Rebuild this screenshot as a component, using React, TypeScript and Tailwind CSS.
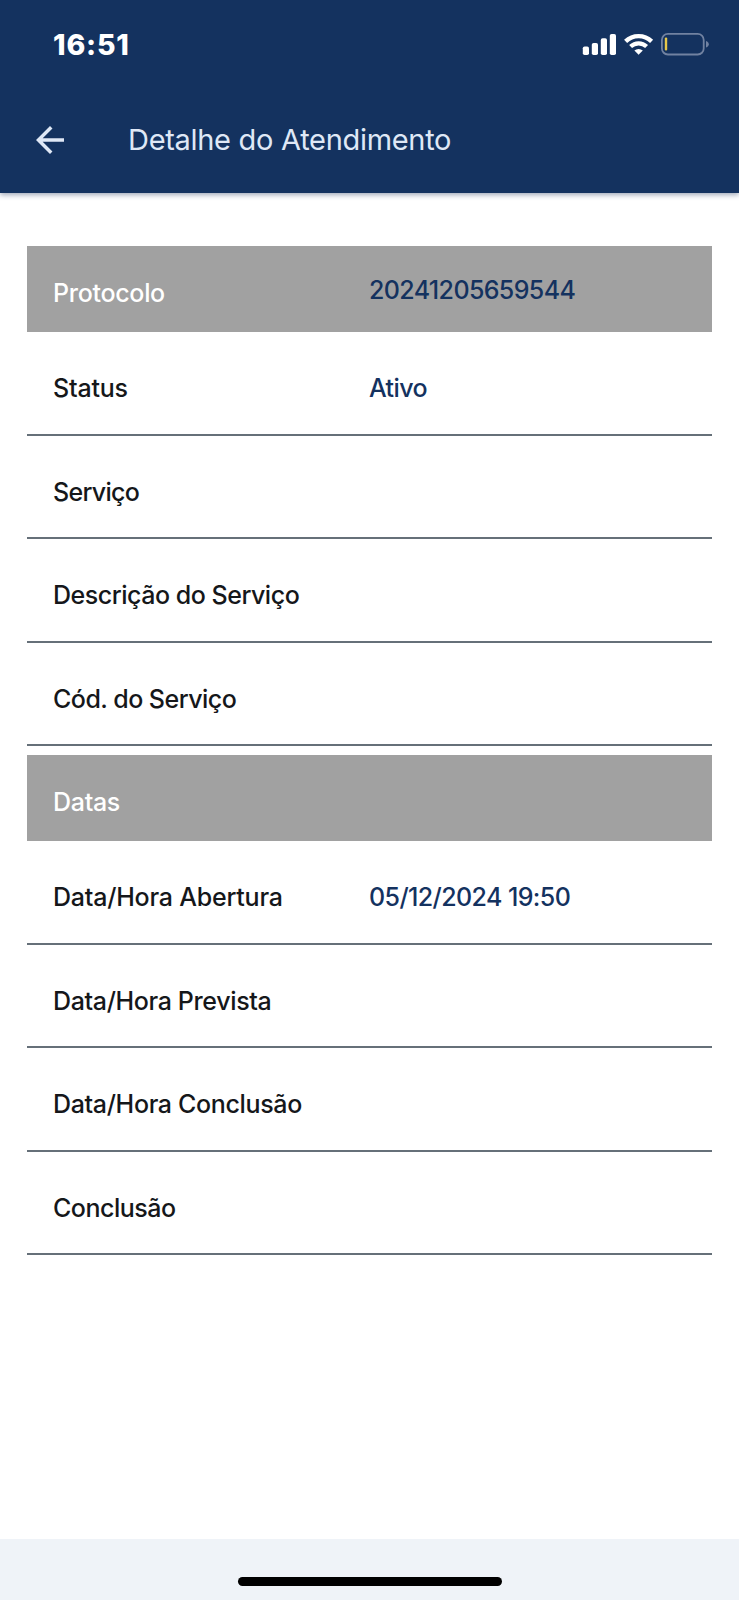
import clsx from 'clsx';

type Field = { label: string; value?: string; tracking: string };

const serviceFields: Field[] = [
    { label: 'Status', value: 'Ativo', tracking: 'tracking-[-0.2px]' },
    { label: 'Serviço', tracking: 'tracking-[-0.7px]' },
    { label: 'Descrição do Serviço', tracking: 'tracking-[-0.48px]' },
    { label: 'Cód. do Serviço', tracking: 'tracking-[-0.53px]' },
];

const dateFields: Field[] = [
    { label: 'Data/Hora Abertura', value: '05/12/2024 19:50', tracking: 'tracking-[-0.22px]' },
    { label: 'Data/Hora Prevista', tracking: 'tracking-[-0.36px]' },
    { label: 'Data/Hora Conclusão', tracking: 'tracking-[-0.34px]' },
    { label: 'Conclusão', tracking: 'tracking-[-0.5px]' },
];

function StatusBar() {
    return (
        <div className="flex h-[88px] items-start justify-between pl-[53px] pr-[29px]">
            <span className="mt-[25px] text-[28.5px] leading-10 font-extrabold tracking-[0.8px] text-white">16:51</span>
            <svg className="mt-[30px]" width="128" height="28" viewBox="582 30 128 28" fill="none">
                {/* Signal */}
                <g fill="#fff">
                    <rect x="582.8" y="46.5" width="6.2" height="8.5" rx="1.8" />
                    <rect x="591.8" y="43" width="6.2" height="12" rx="1.8" />
                    <rect x="600.8" y="38.3" width="6.2" height="16.7" rx="1.8" />
                    <rect x="609.8" y="34" width="6.2" height="21" rx="1.8" />
                </g>
                {/* Wi-Fi */}
                <path d="M625.6 41.4a18.6 18.6 0 0 1 26 0" stroke="#fff" strokeWidth="4.4" />
                <path d="M630.6 46.6a11.6 11.6 0 0 1 16 0" stroke="#fff" strokeWidth="4.2" />
                <path d="M638.6 54.8l-4.2-4.3a6.3 6.3 0 0 1 8.4 0z" fill="#fff" />
                {/* Battery */}
                <rect x="661.9" y="33.9" width="41.8" height="20.6" rx="6" stroke="#7182a1" strokeWidth="1.8" />
                <rect x="664.8" y="37.4" width="2.4" height="13" rx="1" fill="#e6c84a" />
                <path d="M706 41v6.6c1.7-.6 2.8-1.8 2.8-3.3s-1.1-2.7-2.8-3.3z" fill="#7182a1" />
            </svg>
        </div>
    );
}

function Header() {
    return (
        <header className="h-[193px] bg-[#14325f] shadow-[0_2px_5px_rgba(20,40,80,0.4)]">
            <StatusBar />
            <div className="flex h-[103px] items-center pl-[29px]">
                <svg width="42" height="42" viewBox="0 0 24 24" fill="#dfe8f6">
                    <path d="M20 11H7.83l5.59-5.59L12 4l-8 8 8 8 1.41-1.41L7.83 13H20v-2z" />
                </svg>
                <h1 className="ml-[57px] text-[29px] leading-10 tracking-[-0.3px] text-[#dfe8f6]">Detalhe do Atendimento</h1>
            </div>
        </header>
    );
}

function SectionTitle({ title, value, className }: { title: string; value?: string; className?: string }) {
    return (
        <div className={clsx('flex h-[86px] bg-[#a1a1a1] pl-[26px] text-[25px] leading-8 font-medium', className)}>
            <span className="w-[316px] pt-[31px] tracking-[-0.3px] text-white">{title}</span>
            <span className="pt-[28px] tracking-[-0.62px] text-[#14325f]">{value}</span>
        </div>
    );
}

function FieldRow({ field }: { field: Field }) {
    return (
        <div className="flex h-[103.5px] border-b-2 border-[#667079] pt-[40px] pl-[26px] text-[25px] leading-8 font-medium">
            <span className={clsx('w-[316px] text-[#15171a]', field.tracking)}>{field.label}</span>
            <span className="tracking-[-0.6px] text-[#14325f]">{field.value}</span>
        </div>
    );
}

export default function App() {
    return (
        <div className="flex h-[1600px] w-[739px] flex-col bg-white font-['Inter',sans-serif]">
            <Header />
            <main className="flex-1 px-[27px] pt-[53px]">
                <SectionTitle title="Protocolo" value="20241205659544" />
                {serviceFields.map((field) => (
                    <FieldRow key={field.label} field={field} />
                ))}
                <SectionTitle title="Datas" className="mt-[9px]" />
                {dateFields.map((field) => (
                    <FieldRow key={field.label} field={field} />
                ))}
            </main>
            {/* Home indicator */}
            <footer className="flex h-[61px] justify-center bg-[#eff3f8] pt-[38px]">
                <div className="h-[9px] w-[264px] rounded-full bg-black" />
            </footer>
        </div>
    );
}
